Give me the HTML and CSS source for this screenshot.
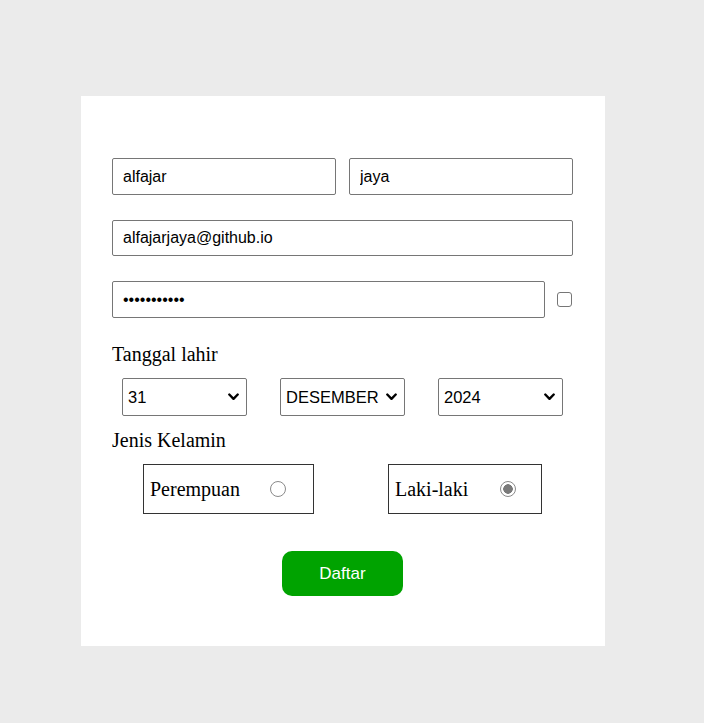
FILE: index.html
```html
<!DOCTYPE html>
<html>
<head>
<meta charset="utf-8">
<link rel="stylesheet" href="styles.css">
</head>
<body>
<form class="card">
  <div class="row">
    <input class="field half" type="text" value="alfajar">
    <input class="field half" type="text" value="jaya">
  </div>
  <div class="row">
    <input class="field full" type="email" value="alfajarjaya@github.io">
  </div>
  <div class="row pass-row">
    <input class="field pass" type="password" value="alfajarjaya">
    <input class="check" type="checkbox">
  </div>
  <div class="label label-date">Tanggal lahir</div>
  <div class="selects">
    <select class="sel"><option>31</option></select>
    <select class="sel"><option>DESEMBER</option></select>
    <select class="sel"><option>2024</option></select>
  </div>
  <div class="label label-gender">Jenis Kelamin</div>
  <div class="genders">
    <label class="gbox g1">Perempuan <input class="radio" type="radio" name="g"></label>
    <label class="gbox g2">Laki-laki <input class="radio" type="radio" name="g" checked></label>
  </div>
  <div class="actions">
    <button class="btn" type="button">Daftar</button>
  </div>
</form>
</body>
</html>
```
FILE: styles.css
```css
html, body {
  margin: 0;
  padding: 0;
  background: #ebebeb;
}
body {
  padding: 96px 0 0 81px;
  font-family: "Liberation Serif", "Times New Roman", serif;
}
.card {
  box-sizing: border-box;
  width: 524px;
  height: 550px;
  background: #fff;
  padding: 62px 32px 50px 31px;
  display: flex;
  flex-direction: column;
}
.row {
  display: flex;
  gap: 12px;
  margin-bottom: 25px;
  align-items: center;
}
.row:first-child { gap: 13px; }
.pass-row {
  margin-bottom: 0;
}
.field {
  box-sizing: border-box;
  height: 37px;
  border: 1px solid #767676;
  border-radius: 2px;
  padding: 0 10px;
  font-family: "Liberation Sans", Arial, sans-serif;
  font-size: 16px;
  color: #000;
  outline: none;
}
.half { width: 224px; }
.full { width: 461px; height: 36px; }
.pass { width: 433px; }
.check {
  -webkit-appearance: none;
  appearance: none;
  box-sizing: border-box;
  margin: 0;
  width: 15px;
  height: 15px;
  border: 1.5px solid #767676;
  border-radius: 3px;
  background: #fff;
}
.label {
  font-size: 20px;
  line-height: 23px;
  height: 23px;
  color: #000;
}
.label-date { margin-top: 25px; }
.selects {
  display: flex;
  justify-content: space-between;
  padding: 0 10px;
  margin-top: 12px;
}
.sel {
  -webkit-appearance: none;
  appearance: none;
  box-sizing: border-box;
  width: 125px;
  height: 38px;
  font-family: "Liberation Sans", Arial, sans-serif;
  font-size: 16.5px;
  color: #000;
  border: 1px solid #767676;
  border-radius: 2px;
  background: #fff url("data:image/svg+xml;utf8,<svg xmlns='http://www.w3.org/2000/svg' width='11' height='8' viewBox='0 0 11 8'><path d='M1.3 1.5 L5.5 5.8 L9.7 1.5' fill='none' stroke='black' stroke-width='2.4' stroke-linecap='round' stroke-linejoin='round'/></svg>") no-repeat right 7px center;
  padding: 0 20px 0 5px;
}
.label-gender { margin-top: 13px; }
.genders {
  display: flex;
  justify-content: space-between;
  padding: 0 31px;
  margin-top: 12px;
}
.gbox {
  box-sizing: border-box;
  height: 50px;
  border: 1px solid #333;
  display: flex;
  align-items: center;
  font-size: 20px;
  padding: 0 0 0 6px;
}
.g1 { width: 171px; }
.g2 { width: 154px; }
.radio {
  -webkit-appearance: none;
  appearance: none;
  box-sizing: border-box;
  margin: 0;
  width: 16px;
  height: 16px;
  border: 1.5px solid #8a8a8a;
  border-radius: 50%;
  background: #fff;
}
.radio:checked {
  background: radial-gradient(circle, #7a7a7a 0 4.5px, #fff 5px);
}
.g1 .radio { margin-left: 30px; }
.g2 .radio { margin-left: 32px; }
.actions {
  display: flex;
  justify-content: center;
  margin-top: 37px;
}
.btn {
  width: 121px;
  height: 45px;
  border: none;
  border-radius: 10px;
  background: #00a300;
  color: #fff;
  font-family: "Liberation Sans", Arial, sans-serif;
  font-size: 17px;
  cursor: pointer;
}
```
